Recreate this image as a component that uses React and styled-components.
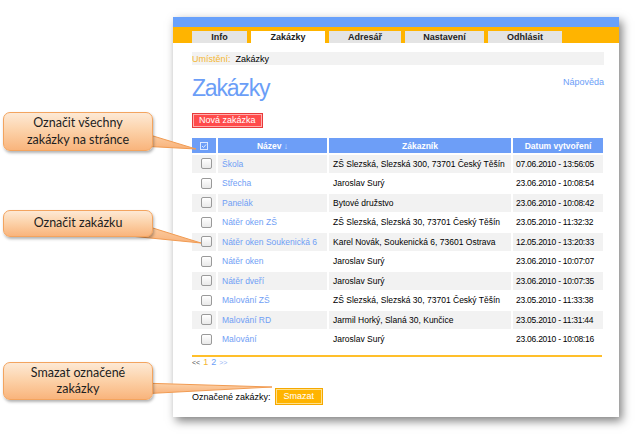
import styled, { createGlobalStyle } from "styled-components"

const GlobalStyle = createGlobalStyle`
    html, body {
        margin: 0;
        padding: 0;
        background: #ffffff;
    }
    body {
        font-family: "Liberation Sans", Arial, sans-serif;
    }
`

const Stage = styled.div`
    position: relative;
    width: 637px;
    height: 436px;
    overflow: hidden;
    box-sizing: border-box;
    padding: 17px 0 0 173px;
`

const Panel = styled.div`
    width: 446px;
    height: 400px;
    background: #ffffff;
    box-shadow: 3px 4px 9px rgba(0, 0, 0, 0.5);
    display: flex;
    flex-direction: column;
    font-size: 8.5px;
    color: #000;
`

const TopBar = styled.div`
    height: 10px;
    background: #69a1fb;
`

const TabBar = styled.div`
    height: 16px;
    background: #ffb400;
    display: flex;
    align-items: flex-end;
    gap: 4px;
    padding-left: 19px;
`

const Tab = styled.div`
    width: ${(p) => p.$w}px;
    height: 12px;
    background: ${(p) => (p.$active ? "#ffffff" : "#e4e4e4")};
    font-weight: bold;
    font-size: 9px;
    color: #222;
    display: flex;
    align-items: center;
    justify-content: center;
`

const Content = styled.div`
    padding: 0 15px 0 19px;
    display: flex;
    flex-direction: column;
    align-items: flex-start;
`

const Breadcrumb = styled.div`
    margin-top: 9px;
    height: 13px;
    width: 100%;
    background: #f2f2f2;
    display: flex;
    align-items: center;
    gap: 5px;
    font-size: 9px;
    color: #000;
`

const CrumbLabel = styled.span`
    color: #f4b630;
`

const TitleRow = styled.div`
    margin-top: 10px;
    width: 100%;
    display: flex;
    justify-content: space-between;
    align-items: flex-start;
`

const Title = styled.h1`
    margin: 0;
    font-size: 23px;
    line-height: 26px;
    font-weight: normal;
    letter-spacing: -1.2px;
    color: #6b9ef7;
`

const HelpLink = styled.a`
    margin-top: 2px;
    font-size: 9px;
    color: #6b9ef7;
    text-decoration: none;
`

const ActionButton = styled.button`
    height: ${(p) => p.$h}px;
    padding: 0 ${(p) => p.$pad}px;
    border: 1px solid ${(p) => p.$edge};
    box-shadow: inset 0 0 0 1px ${(p) => p.$inner};
    background: ${(p) => p.$bg};
    color: #ffffff;
    font-family: "Liberation Sans", Arial, sans-serif;
    font-size: 9px;
    line-height: 1;
    cursor: pointer;
`

const NewButton = styled(ActionButton)`
    margin-top: 12px;
`

const Table = styled.table`
    margin: 8px 0 0 -2px;
    border-collapse: separate;
    border-spacing: 2px;
    table-layout: fixed;
    width: 415px;
`

const HeadCell = styled.th`
    height: 15px;
    padding: 0;
    background: #6d9ef7;
    color: #ffffff;
    font-weight: bold;
    font-size: 8.5px;
    text-align: center;
`

const Arrow = styled.span`
    color: #cfe0ff;
    font-weight: normal;
`

const Row = styled.tr`
    background: ${(p) => (p.$odd ? "#f2f2f2" : "#ffffff")};
`

const Cell = styled.td`
    height: 17.5px;
    padding: 0 0 0 ${(p) => p.$pad || 4}px;
    white-space: nowrap;
    overflow: hidden;
    font-size: 8.5px;
    color: #000;
    text-align: ${(p) => (p.$center ? "center" : "left")};
`

const DateCell = styled(Cell)`
    letter-spacing: -0.25px;
`

const NameLink = styled.a`
    color: #6f9ef5;
    text-decoration: none;
`

const Check = styled.span`
    display: inline-block;
    vertical-align: middle;
    width: 9px;
    height: 9px;
    border: 1px solid #9a9a9a;
    border-radius: 2px;
    background: linear-gradient(#ffffff, #e9e9e9);
`

const OrangeRule = styled.div`
    margin-top: 5px;
    width: 410px;
    height: 2px;
    background: #ffbf2a;
`

const Pager = styled.div`
    line-height: 10px;
    font-size: 9px;
    display: flex;
    align-items: baseline;
    gap: 3px;
`

const PagerArrow = styled.span`
    font-size: 7px;
    color: ${(p) => (p.$dim ? "#9bb8f5" : "#555")};
`

const PageNum = styled.span`
    color: ${(p) => (p.$current ? "#f4b630" : "#6b9ef7")};
`

const BulkRow = styled.div`
    margin-top: 20px;
    display: flex;
    align-items: center;
    gap: 4px;
    font-size: 9px;
    color: #000;
`

const Tails = styled.svg`
    position: absolute;
    left: 0;
    top: 0;
    z-index: 1;
    pointer-events: none;
`

const Callout = styled.div`
    position: absolute;
    left: 3px;
    top: ${(p) => p.$top}px;
    width: 150px;
    height: ${(p) => p.$h}px;
    z-index: 2;
    box-sizing: border-box;
    border: 1px solid #f3a45f;
    border-radius: 7px;
    background: linear-gradient(#fde9d5 0%, #fcd3ab 45%, #f9b47c 100%);
    box-shadow: 1px 2px 3px rgba(0, 0, 0, 0.3);
    display: flex;
    align-items: center;
    justify-content: center;
    text-align: center;
    font-family: Lato, "Open Sans", sans-serif;
    font-size: 12.5px;
    line-height: 16.5px;
    color: #1e1e1e;
`

const tabs = [
    { label: "Info", w: 55 },
    { label: "Zakázky", w: 74, active: true },
    { label: "Adresář", w: 72 },
    { label: "Nastavení", w: 79 },
    { label: "Odhlásit", w: 74 },
]

const orders = [
    ["Škola", "ZŠ Slezská, Slezská 300, 73701 Český Těšín", "07.06.2010 - 13:56:05"],
    ["Střecha", "Jaroslav Surý", "23.06.2010 - 10:08:54"],
    ["Panelák", "Bytové družstvo", "23.06.2010 - 10:08:42"],
    ["Nátěr oken ZŠ", "ZŠ Slezská, Slezská 30, 73701 Český Těšín", "23.05.2010 - 11:32:32"],
    ["Nátěr oken Soukenická 6", "Karel Novák, Soukenická 6, 73601 Ostrava", "12.05.2010 - 13:20:33"],
    ["Nátěr oken", "Jaroslav Surý", "23.06.2010 - 10:07:07"],
    ["Nátěr dveří", "Jaroslav Surý", "23.06.2010 - 10:07:35"],
    ["Malování ZŠ", "ZŠ Slezská, Slezská 30, 73701 Český Těšín", "23.05.2010 - 11:33:38"],
    ["Malování RD", "Jarmil Horký, Slaná 30, Kunčice", "23.05.2010 - 11:31:44"],
    ["Malování", "Jaroslav Surý", "23.06.2010 - 10:08:16"],
]

const HeadCheckIcon = () => (
    <svg width="8" height="8" viewBox="0 0 8 8" style={{ verticalAlign: "middle" }}>
        <rect x="0.5" y="0.5" width="7" height="7" fill="none" stroke="#dce8ff" strokeWidth="1" />
        <path d="M2 4 L3.5 5.5 L6 2.5" fill="none" stroke="#dce8ff" strokeWidth="1" />
    </svg>
)

const App = () => {
    return (
        <>
            <GlobalStyle />
            <Stage>
                <Panel>
                    <TopBar />
                    <TabBar>
                        {tabs.map((t) => (
                            <Tab key={t.label} $w={t.w} $active={t.active}>
                                {t.label}
                            </Tab>
                        ))}
                    </TabBar>
                    <Content>
                        <Breadcrumb>
                            <CrumbLabel>Umístění:</CrumbLabel>
                            <span>Zakázky</span>
                        </Breadcrumb>
                        <TitleRow>
                            <Title>Zakázky</Title>
                            <HelpLink href="#">Nápověda</HelpLink>
                        </TitleRow>
                        <NewButton $h={15} $pad={6} $bg="#ff4b4b" $edge="#e83a3a" $inner="#ffb0b0">
                            Nová zakázka
                        </NewButton>
                        <Table>
                            <colgroup>
                                <col style={{ width: 24 }} />
                                <col style={{ width: 109 }} />
                                <col style={{ width: 182 }} />
                                <col style={{ width: 90 }} />
                            </colgroup>
                            <thead>
                                <tr>
                                    <HeadCell>
                                        <HeadCheckIcon />
                                    </HeadCell>
                                    <HeadCell>
                                        Název <Arrow>↓</Arrow>
                                    </HeadCell>
                                    <HeadCell>Zákazník</HeadCell>
                                    <HeadCell>Datum vytvoření</HeadCell>
                                </tr>
                            </thead>
                            <tbody>
                                {orders.map(([name, customer, date], i) => (
                                    <Row key={name} $odd={i % 2 === 0}>
                                        <Cell $center $pad={0}>
                                            <Check />
                                        </Cell>
                                        <Cell>
                                            <NameLink href="#">{name}</NameLink>
                                        </Cell>
                                        <Cell>{customer}</Cell>
                                        <DateCell $pad={3}>{date}</DateCell>
                                    </Row>
                                ))}
                            </tbody>
                        </Table>
                        <OrangeRule />
                        <Pager>
                            <PagerArrow>&lt;&lt;</PagerArrow>
                            <PageNum $current>1</PageNum>
                            <PageNum>2</PageNum>
                            <PagerArrow $dim>&gt;&gt;</PagerArrow>
                        </Pager>
                        <BulkRow>
                            <span>Označené zakázky:</span>
                            <ActionButton $h={17} $pad={8} $bg="#ffb400" $edge="#f5a800" $inner="#ffe089">
                                Smazat
                            </ActionButton>
                        </BulkRow>
                    </Content>
                </Panel>

                <Tails width="637" height="436" viewBox="0 0 637 436">
                    <defs>
                        <linearGradient id="tailFill" x1="0" y1="0" x2="0" y2="1">
                            <stop offset="0" stopColor="#fcd2aa" />
                            <stop offset="1" stopColor="#f8b27a" />
                        </linearGradient>
                    </defs>
                    <g fill="url(#tailFill)" stroke="#f19b52" strokeWidth="1" strokeLinejoin="round">
                        <polygon points="140,132 196,149 140,146" />
                        <polygon points="140,224 201,243 130,236" />
                        <polygon points="140,383 272,387 140,394" />
                    </g>
                </Tails>

                <Callout $top={112} $h={39}>
                    Označit všechny
                    <br />
                    zakázky na stránce
                </Callout>
                <Callout $top={210} $h={27}>Označit zakázku</Callout>
                <Callout $top={362} $h={38}>
                    Smazat označené
                    <br />
                    zakázky
                </Callout>
            </Stage>
        </>
    )
}

export default App
